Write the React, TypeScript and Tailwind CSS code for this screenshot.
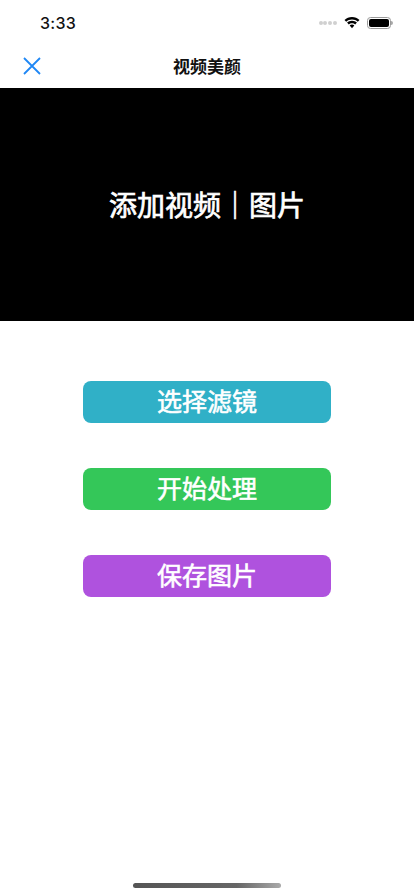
function StatusBar() {
  return (
    <div className="h-[44px] flex items-start justify-between pt-[13px] pl-[40px] pr-[21.5px]">
      <span className="text-[16px] leading-[20px] font-medium tracking-[0.3px] text-[#111] font-['Inter','Liberation_Sans',sans-serif]">3:33</span>
      <div className="flex items-center gap-[7px] h-[20px]">
        <div className="flex gap-[0.8px]">
          <span className="w-[4px] h-[4px] rounded-full bg-[#d0d0d0]" />
          <span className="w-[4px] h-[4px] rounded-full bg-[#d0d0d0]" />
          <span className="w-[4px] h-[4px] rounded-full bg-[#d0d0d0]" />
          <span className="w-[4px] h-[4px] rounded-full bg-[#d0d0d0]" />
        </div>
        <svg width="16" height="12" viewBox="0 0 16 12">
          <path d="M8 2.4c2.3 0 4.300.9 5.800 2.300l1.700-1.800C13.500 1 10.900 0 8 0S2.500 1 .5 2.900l1.700 1.800C3.700 3.300 5.700 2.400 8 2.400z" fill="#000" />
          <path d="M8 6.200c1.300 0 2.400.5 3.200 1.200l1.700-1.800C11.600 4.400 9.900 3.700 8 3.700S4.400 4.400 3.100 5.600l1.700 1.800C5.600 6.700 6.700 6.200 8 6.200z" fill="#000" />
          <path d="M8 7.600c-.9 0-1.700.3-2.300.9L8 11.200l2.300-2.700c-.6-.6-1.400-.9-2.300-.9z" fill="#000" />
        </svg>
        <div className="flex items-center">
          <div className="w-[23.5px] h-[12px] rounded-[3.5px] border border-[#9a9a9a] p-[1px]">
            <div className="w-full h-full rounded-[2px] bg-black" />
          </div>
          <div className="w-[1.5px] h-[4px] ml-[0.5px] rounded-r-full bg-[#a8a8a8]" />
        </div>
      </div>
    </div>
  );
}

function NavBar() {
  return (
    <div className="relative h-[44px] flex items-center justify-center">
      <svg width="18" height="18" viewBox="0 0 18 18" className="absolute left-[23px] top-[13px]">
        <path d="M1 1L17 17M17 1L1 17" stroke="#1f87f5" strokeWidth="1.8" fill="none" />
      </svg>
      <span className="text-[17px] leading-[22px] font-bold text-[#111] font-['Noto_Sans_CJK_SC',sans-serif]">视频美颜</span>
    </div>
  );
}

function ActionButton({ label, color }: { label: string; color: string }) {
  return (
    <button className={`w-[248px] h-[42px] rounded-[8px] flex items-center justify-center pb-[2px] text-white text-[25px] font-normal [-webkit-text-stroke:0.6px_white] font-['Noto_Sans_CJK_SC',sans-serif] ${color}`}>
      {label}
    </button>
  );
}

export default function App() {
  return (
    <div className="relative w-[414px] h-[896px] bg-white overflow-hidden flex flex-col">
      <StatusBar />
      <NavBar />
      <div className="h-[233px] bg-black flex items-center justify-center pb-[2px] text-white text-[28px] font-normal [-webkit-text-stroke:0.7px_white] font-['Noto_Sans_CJK_SC',sans-serif]">
        添加视频｜图片
      </div>
      <div className="flex flex-col items-center pt-[60px]">
        <ActionButton label="选择滤镜" color="bg-[#30b0c7]" />
        <div className="h-[45px]" />
        <ActionButton label="开始处理" color="bg-[#34c759]" />
        <div className="h-[45px]" />
        <ActionButton label="保存图片" color="bg-[#af52de]" />
      </div>
      <div className="absolute left-[133px] top-[883px] w-[148px] h-[5px] rounded-full bg-gradient-to-r from-[#555] from-0% via-[#666] via-70% to-[#aaa] to-100%" />
    </div>
  );
}
